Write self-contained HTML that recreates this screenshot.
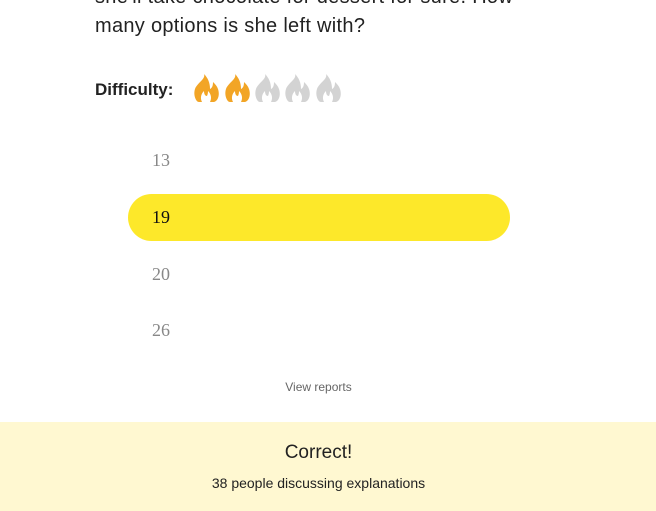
<!DOCTYPE html>
<html><head><meta charset="utf-8"><style>
body{margin:0;width:656px;height:511px;overflow:hidden;background:#fff;font-family:"Liberation Sans",sans-serif;position:relative}
.q{position:absolute;left:95px;font-size:20px;color:#222;white-space:nowrap;letter-spacing:0.3px}
.diff{position:absolute;left:95px;top:80px;font-size:17px;font-weight:bold;color:#222}
.fl{position:absolute;top:74px}
.opt{position:absolute;left:152px;font-family:"Liberation Serif",serif;font-size:18px;color:#888}
.sel{position:absolute;left:128px;top:194px;width:382px;height:47px;border-radius:24px;background:#fde82a}
.vr{position:absolute;top:380px;left:0;width:637px;text-align:center;font-size:12px;color:#666}
.foot{position:absolute;left:0;top:422px;width:656px;height:89px;background:#fff8d1}
</style></head><body>
<div class="q" style="top:-14px">she'll take chocolate for dessert for sure. How</div>
<div class="q" style="top:15px">many options is she left with?</div>
<div class="diff">Difficulty:</div>
<svg class="fl" style="left:190px" width="160" height="30" viewBox="0 0 160 30">
<defs><path id="f" d="M11 0 C13 5 4 9 2 15 C0 21 3 28 6 28 L21 28 C25 27 27 21 25 15 C24 12 22 10 20 8 C20 12 19 14 17 15 C17 9 15 4 11 0 Z M9 28 C7 24 8 20 11 17 C11 20 12 22 14 22 C15 20 15 18 15 17 C18 20 19 24 17 28 Z"/></defs>
<use href="#f" x="3" y="0" fill="#f2a526" fill-rule="evenodd"/>
<use href="#f" x="34" y="0" fill="#f2a526" fill-rule="evenodd"/>
<use href="#f" x="64" y="0" fill="#d3d3d3" fill-rule="evenodd"/>
<use href="#f" x="94" y="0" fill="#d3d3d3" fill-rule="evenodd"/>
<use href="#f" x="125" y="0" fill="#d3d3d3" fill-rule="evenodd"/>
</svg>
<div class="opt" style="top:150px">13</div>
<div class="sel"></div>
<div class="opt" style="top:207px;color:#111">19</div>
<div class="opt" style="top:264px">20</div>
<div class="opt" style="top:320px">26</div>
<div class="vr">View reports</div>
<div class="foot">
<div style="position:absolute;top:20px;width:637px;text-align:center;font-size:19px;color:#222">Correct!</div>
<div style="position:absolute;top:53px;width:637px;text-align:center;font-size:14px;color:#222">38 people discussing explanations</div>
</div>
</body></html>
